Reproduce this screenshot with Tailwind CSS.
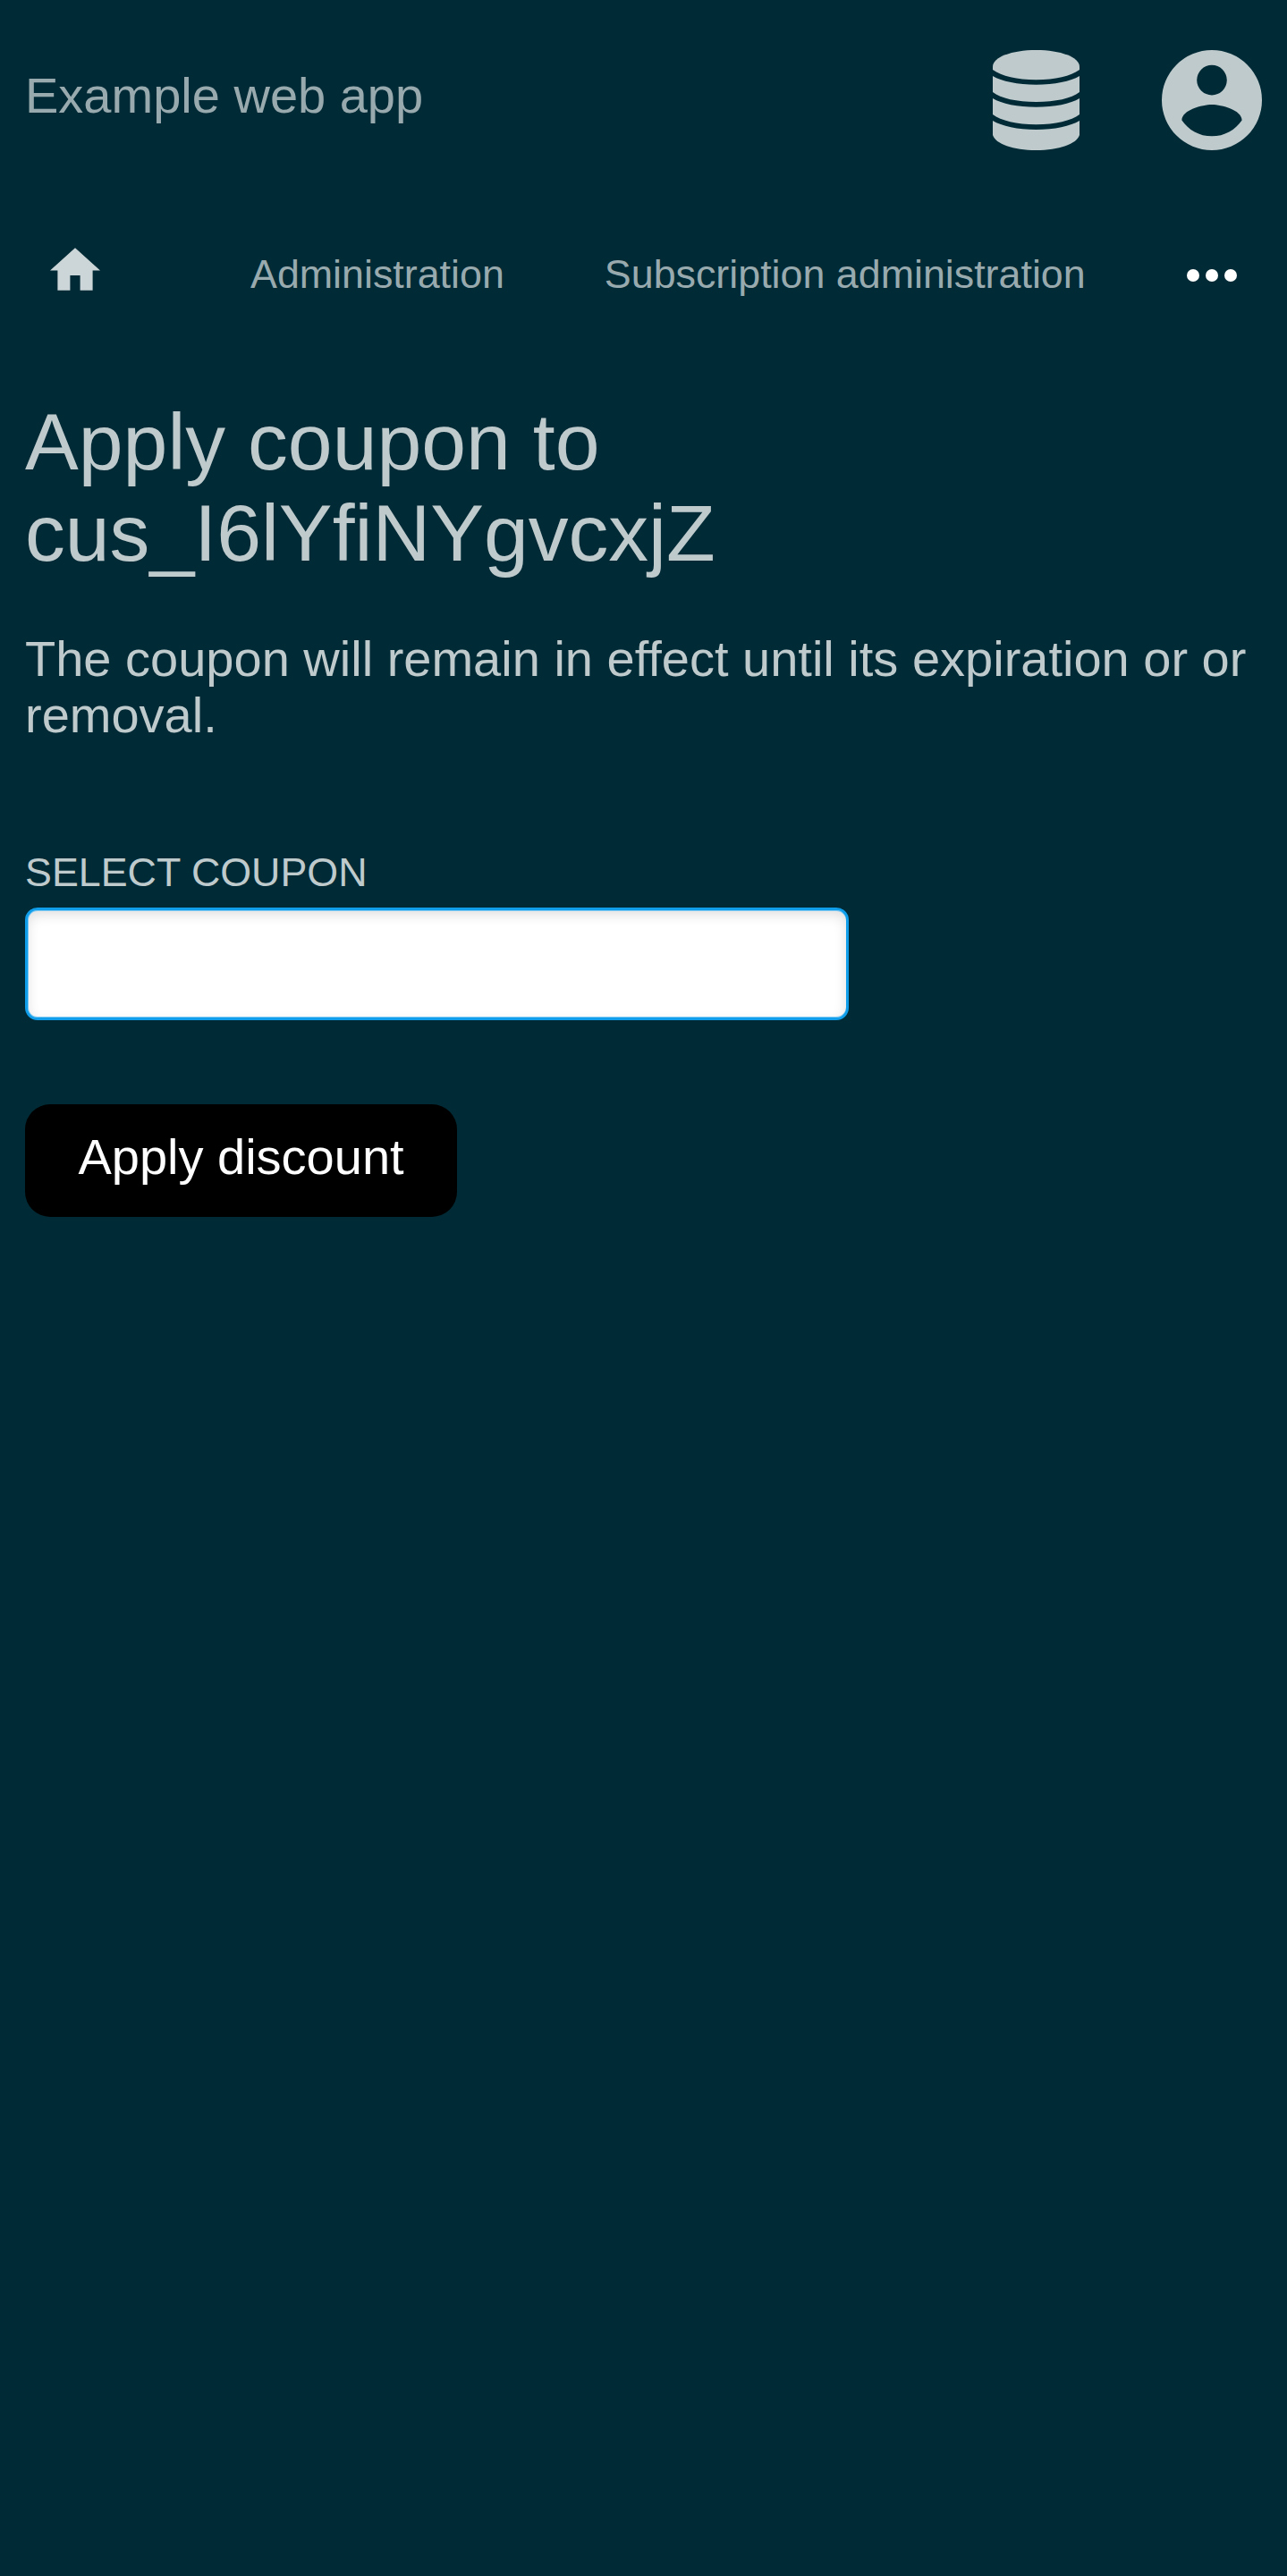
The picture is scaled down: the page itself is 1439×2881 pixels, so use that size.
<!DOCTYPE html>
<html lang="en">
<head>
<meta charset="utf-8">
<title>Example web app</title>
<script src="https://cdn.jsdelivr.net/npm/@tailwindcss/browser@4"></script>
</head>
<body class="min-h-screen bg-[#002b36] font-['Liberation_Sans',Arial,sans-serif] text-[56px] leading-[63px] text-[#bfcacd]">
<header class="flex h-[224px] items-start justify-between px-7">
  <a class="mt-[75px] text-[#99aaaf]">Example web app</a>
  <div class="mt-14 flex gap-[92px]">
    <svg class="h-28 w-[97px]" viewBox="0 0 97 112" fill="currentColor">
      <path d="M0 18.500C0 8 21 0 48.500 0S97 8 97 18.500V22C87 29 70 33.300 48.500 33.300S10 29 0 22Z"/>
      <path d="M0 29C10 35 28 38.700 48.500 38.700S87 35 97 29V47C88 54 70 58 48.500 58S9 54 0 47Z"/>
      <path d="M0 54C10 60 28 63.800 48.500 63.800S87 60 97 54V72C88 79 70 83.200 48.500 83.200S9 79 0 72Z"/>
      <path d="M0 79C10 85 28 89 48.500 89S87 85 97 79V95C94 105 74 112 48.500 112S3 105 0 95Z"/>
    </svg>
    <svg class="size-28" viewBox="2 2 20 20" fill="currentColor"><path d="M12,19.2C9.500,19.2 7.290,17.920 6,16C6.030,14 10,12.9 12,12.9C14,12.9 17.970,14 18,16C16.710,17.920 14.500,19.2 12,19.2M12,5A3,3 0 0,1 15,8A3,3 0 0,1 12,11A3,3 0 0,1 9,8A3,3 0 0,1 12,5M12,2A10,10 0 0,0 2,12A10,10 0 0,0 12,22A10,10 0 0,0 22,12A10,10 0 0,0 12,2Z"/></svg>
  </div>
</header>
<nav class="flex h-[168px] items-start px-14 text-[44.8px] leading-[52px] text-[#99aaaf]">
  <svg class="mt-[53px] mr-[168px] h-[48px] w-14 shrink-0 text-[#ccd5d7]" viewBox="2 3 20 17" fill="currentColor"><path d="M10,20V14H14V20H19V12H22L12,3L2,12H5V20H10Z"/></svg>
  <a class="mt-14 mr-28 whitespace-nowrap">Administration</a>
  <a class="mt-14 whitespace-nowrap">Subscription administration</a>
  <svg class="mt-[77px] ml-auto h-3.5 w-14 shrink-0 text-white" viewBox="0 0 56 14" fill="currentColor"><circle cx="7" cy="7" r="7"/><circle cx="28" cy="7" r="7"/><circle cx="49" cy="7" r="7"/></svg>
</nav>
<main class="px-7 pt-[51px]">
  <h1 class="text-[89.6px] leading-[102px]">Apply coupon to<br>cus_I6lYfiNYgvcxjZ</h1>
  <p class="mt-[58px]">The coupon will remain in effect until its expiration or or removal.</p>
  <form class="mt-[118px] flex flex-col items-start">
    <label class="text-[44.8px] leading-[52px]" for="coupon">SELECT COUPON</label>
    <input id="coupon" class="mt-[14px] h-[126px] w-[921px] rounded-[14px] border-3 border-[#109eea] bg-white px-7 text-black shadow-[inset_0_1px_0_#7cc8f3,inset_0_-1px_0_#7cc8f3,inset_1px_0_0_#7cc8f3,inset_0_5px_14px_rgba(0,0,0,0.13)] outline-none">
    <button type="button" class="mt-[94px] h-[126px] w-[483px] rounded-[28px] bg-black pb-[9px] text-white">Apply discount</button>
  </form>
</main>
</body>
</html>
